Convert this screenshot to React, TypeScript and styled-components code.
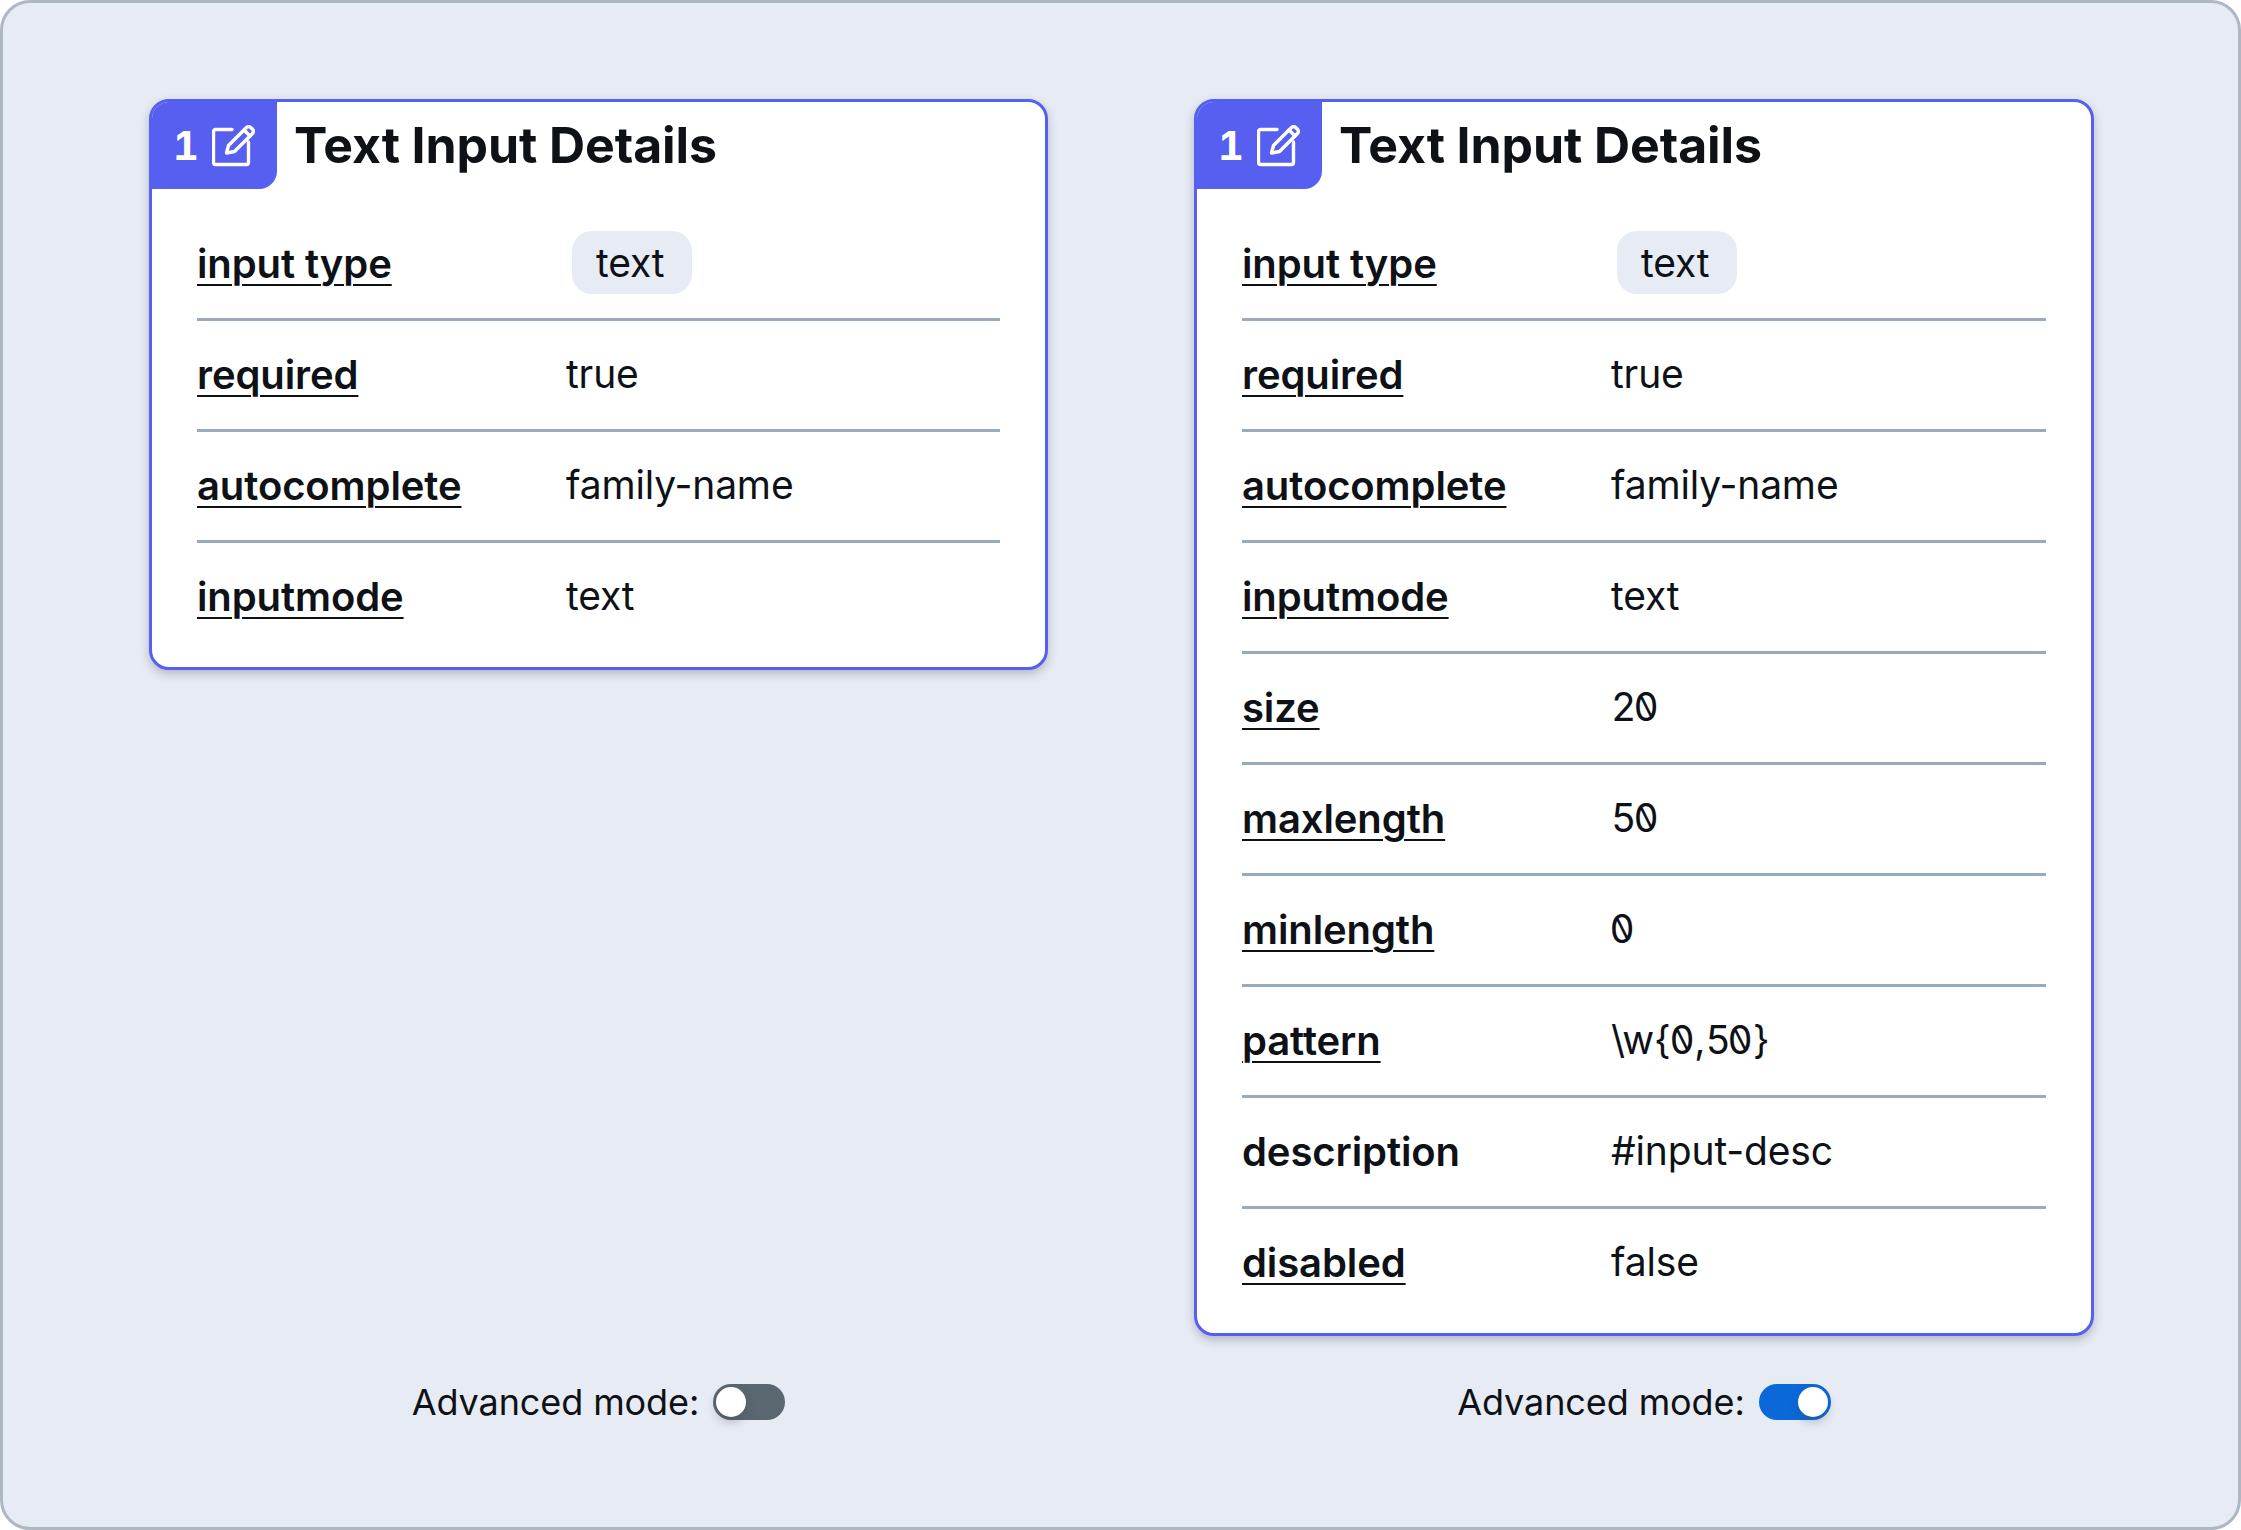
import React from "react";
import styled, { createGlobalStyle } from "styled-components";

const Global = createGlobalStyle`
  html, body { margin: 0; padding: 0; background: #fff; }
  body { font-family: Inter, "Noto Sans", sans-serif; color: #0e1116; }
`;

const Frame = styled.div`
  box-sizing: border-box;
  width: 2241px;
  height: 1530px;
  background: #e7ebf3;
  border: 3px solid #adb8c2;
  border-radius: 30px;
  padding: 96px 146px 0;
  display: grid;
  grid-template-columns: 899px 900px;
  column-gap: 146px;
`;

const Column = styled.div`
  display: flex;
  flex-direction: column;
  height: 1335px;
`;

const Card = styled.section`
  box-sizing: border-box;
  background: #fff;
  border: 3px solid #565ff0;
  border-radius: 20px;
  box-shadow: 0 4px 10px rgba(60, 70, 90, 0.3);
  overflow: hidden;
`;

const Header = styled.header`
  display: flex;
  align-items: flex-start;
`;

const Badge = styled.div`
  width: 125px;
  height: 87px;
  background: #565ff0;
  border-bottom-right-radius: 18px;
  color: #fff;
  display: flex;
  align-items: center;
  justify-content: center;
  gap: 13px;
  font-size: 40px;
  font-weight: 700;
  font-feature-settings: "tnum";
`;

const Title = styled.h2`
  margin: 0 0 0 17px;
  font-size: 50px;
  line-height: 87px;
  font-weight: 700;
  letter-spacing: -0.1px;
`;

const Table = styled.div`
  padding: 21px 45px 16px;
`;

const Row = styled.div`
  display: grid;
  grid-template-columns: 369px 1fr;
  align-items: center;
  height: 108px;
  & + & { border-top: 3px solid #9aa9bc; }
`;

const Label = styled.span<{ $plain?: boolean }>`
  font-size: 40px;
  font-weight: 600;
  letter-spacing: -0.1px;
  padding-bottom: 2px;
  text-decoration: ${(p) => (p.$plain ? "none" : "underline")};
  text-decoration-thickness: 2px;
  text-underline-offset: 6px;
`;

const Value = styled.span`
  font-size: 39px;
  letter-spacing: -0.15px;
  padding-bottom: 3px;
`;

const Digit = styled.span<{ $zero?: boolean }>`
  display: inline-block;
  letter-spacing: -1.5px;
  font-feature-settings: "tnum", "zero";
  transform: ${(p) => (p.$zero ? "scaleX(-1)" : "none")};
`;

const Tag = styled.span`
  justify-self: start;
  margin: 0 0 3px 6px;
  padding: 0 28px 0 24px;
  height: 63px;
  line-height: 63px;
  background: #e7ebf3;
  border-radius: 20px;
  font-size: 39px;
  letter-spacing: -0.15px;
`;

const ToggleRow = styled.div`
  margin-top: auto;
  margin-bottom: 10px;
  display: flex;
  justify-content: center;
  align-items: center;
  gap: 14px;
`;

const ToggleLabel = styled.span`
  font-size: 36px;
  letter-spacing: -0.1px;
`;

const Track = styled.span<{ $on?: boolean }>`
  box-sizing: border-box;
  width: 72px;
  height: 36px;
  padding: 3px;
  border-radius: 18px;
  display: flex;
  justify-content: ${(p) => (p.$on ? "flex-end" : "flex-start")};
  background: ${(p) => (p.$on ? "#0a68d8" : "#5a6670")};
`;

const Knob = styled.span`
  width: 30px;
  height: 30px;
  border-radius: 50%;
  background: #fff;
  box-shadow: 0 5px 10px rgba(60, 70, 90, 0.3);
`;

type RowData = [string, string, boolean?];

const rowsA: RowData[] = [
  ["input type", "text"],
  ["required", "true"],
  ["autocomplete", "family-name"],
  ["inputmode", "text"],
];
const rowsB: RowData[] = [
  ...rowsA,
  ["size", "20"],
  ["maxlength", "50"],
  ["minlength", "0"],
  ["pattern", "\\w{0,50}"],
  ["description", "#input-desc", true],
  ["disabled", "false"],
];

const EditIcon = () => (
  <svg width="44" height="44" viewBox="0 0 44 44" fill="none" stroke="#fff" strokeWidth="3.4" strokeLinecap="round" strokeLinejoin="round">
    <path d="M20 5.5H3.5a2 2 0 0 0-2 2v31a2 2 0 0 0 2 2h31a2 2 0 0 0 2-2V18" />
    <path d="M14.5 29l2-7.5L34.5 3.5a3 3 0 0 1 4.2 0l1.8 1.8a3 3 0 0 1 0 4.2L22.5 27.5z" />
    <path d="M32 6l6 6" />
  </svg>
);

const withDigits = (v: string) =>
  v.split(/(\d)/).map((part, i) =>
    /\d/.test(part) ? (
      <Digit key={i} $zero={part === "0"}>
        {part}
      </Digit>
    ) : (
      part
    ),
  );

const Details = ({ rows, on }: { rows: RowData[]; on?: boolean }) => (
  <Column>
    <Card>
      <Header>
        <Badge>
          <span>1</span>
          <EditIcon />
        </Badge>
        <Title>Text Input Details</Title>
      </Header>
      <Table>
        {rows.map(([k, v, plain], i) => (
          <Row key={k}>
            <Label $plain={plain}>{k}</Label>
            {i === 0 ? <Tag>{v}</Tag> : <Value>{withDigits(v)}</Value>}
          </Row>
        ))}
      </Table>
    </Card>
    <ToggleRow>
      <ToggleLabel>Advanced mode:</ToggleLabel>
      <Track $on={on}>
        <Knob />
      </Track>
    </ToggleRow>
  </Column>
);

export default function App() {
  return (
    <>
      <Global />
      <Frame>
        <Details rows={rowsA} />
        <Details rows={rowsB} on />
      </Frame>
    </>
  );
}
